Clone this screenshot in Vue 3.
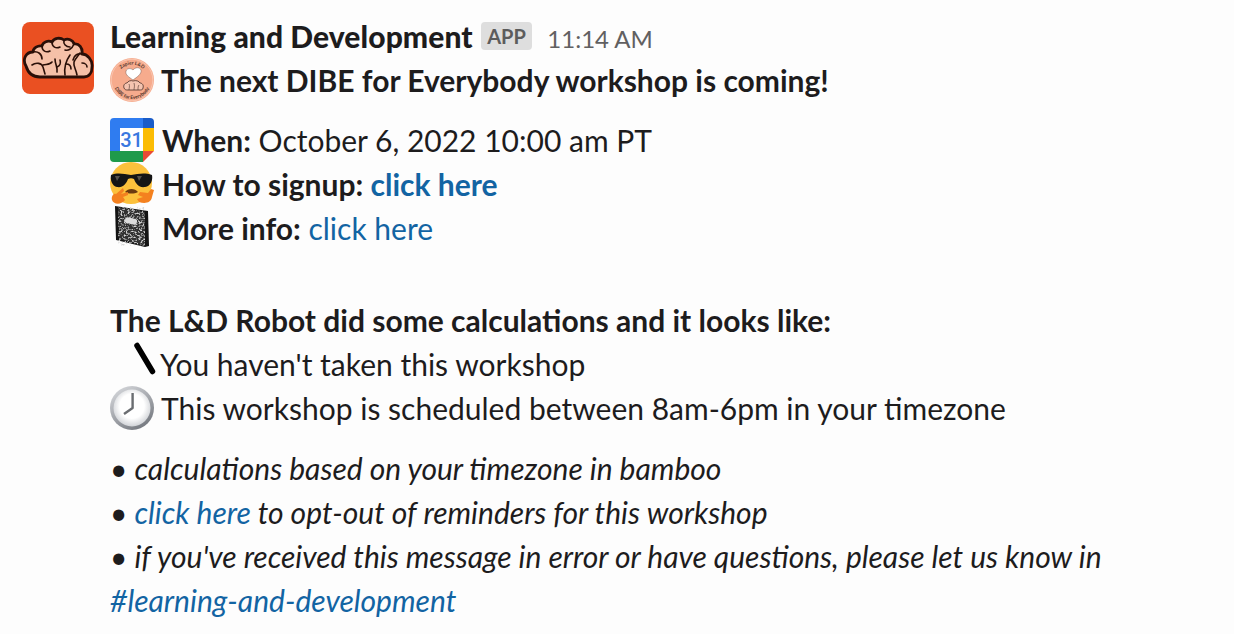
<script setup>
const brainOutline = "M4 44 C0 37 4 30 11 30 C11 26 16 23 20 24 C21 20 26 18 30 20 C32 16 38 15 42 18 C46 16 51 18 52 22 C57 21 61 26 60 32 C65 32 71 38 70 45 C70 51 67 55 62 55 L18 55 C11 55 6 51 4 44 Z"
const brainLines = [
  "M11 30 C16 29 20 32 20 37",
  "M20 24 C20 29 24 31 28 29",
  "M30 20 C30 25 34 27 38 25",
  "M42 18 C41 22 44 25 48 25",
  "M52 22 C50 27 46 29 43 28",
  "M60 32 C56 31 52 33 51 38",
  "M10 43 C14 40 20 41 21 45 L23 52",
  "M21 43 C24 42 28 43 30 40",
  "M35 50 C36 46 33 42 33 37",
  "M35 45 C38 44 39 41 38 38",
  "M43 53 C42 46 43 40 48 33",
  "M44 42 C47 42 49 44 49 47",
  "M55 53 C54 47 51 44 52 40 C53 37 56 34 58 31",
  "M60 41 C63 41 65 43 65 45"
]
</script>

<template>
  <div class="message">
    <div class="avatar">
      <svg viewBox="0 0 72 72" class="brain">
        <path :d="brainOutline" fill="#f5c0a8" stroke="#2a0f08" stroke-width="2.8" stroke-linejoin="round" />
        <path v-for="(l, i) in brainLines" :key="i" :d="l" fill="none" stroke="#2a0f08" stroke-width="1.6" stroke-linecap="round" />
      </svg>
    </div>
    <div class="body">
      <div class="header">
        <span class="name">Learning and Development</span>
        <span class="badge">APP</span>
        <span class="time">11:14 AM</span>
      </div>
      <div class="line strong">
        <span class="emoji">
          <svg viewBox="0 0 44 44">
            <defs>
              <path id="arcTop" d="M6.5 22 A15.5 15.5 0 0 1 37.5 22" />
              <path id="arcBottom" d="M3 22 A19 19 0 0 0 41 22" />
            </defs>
            <circle cx="22" cy="22" r="22" fill="#f6ab8d" />
            <circle cx="22" cy="22" r="20.8" fill="none" stroke="#fbd0bd" stroke-width="0.7" />
            <text font-family="Lato" font-size="4.8" font-weight="700" fill="#4a3028" text-anchor="middle"><textPath href="#arcTop" startOffset="50%">Zapier L&amp;D</textPath></text>
            <text font-family="Lato" font-size="4.8" font-weight="700" fill="#4a3028" text-anchor="middle"><textPath href="#arcBottom" startOffset="50%">DIBE for Everybody</textPath></text>
            <path d="M23 22 C19 19 15 17 16 13 C17 10 21 10 23 12 C25 9 30 9 31 12 C32 16 27 19 23 22 Z" fill="#fff" stroke="#7a5a50" stroke-width="0.5" />
            <path d="M14 30 C13 27 15 25 17 25 C18 23 21 22 23 23 C26 22 29 23 30 25 C32 25 34 27 33 30 C33 32 31 32 29 32 L18 32 C16 32 15 32 14 30 Z" fill="#f4c4b0" stroke="#4a3028" stroke-width="0.8" />
            <path d="M19 32 C19 30 20 28 19 26 M24 32 C24 30 25 28 24 25 M28 32 C28 30 28 28 29 27" fill="none" stroke="#4a3028" stroke-width="0.6" />
          </svg>
        </span>
        <span class="text nudge">The next DIBE for Everybody workshop is coming!</span>
      </div>

      <div class="line para">
        <span class="emoji">
          <svg viewBox="0 0 44 44">
            <path d="M4 0 H33 V10 H10 V33 H0 V4 A4 4 0 0 1 4 0 Z" fill="#2f7cf0" />
            <path d="M33 0 H40 A4 4 0 0 1 44 4 V10 H33 Z" fill="#1a5cc8" />
            <rect x="33" y="10" width="11" height="23" fill="#fbbc04" />
            <path d="M0 33 H33 V44 H4 A4 4 0 0 1 0 40 Z" fill="#1f9a4b" />
            <path d="M33 33 H44 L33 44 Z" fill="#e94a35" />
            <rect x="10" y="10" width="23" height="23" fill="#fff" />
            <text x="21.5" y="29" font-family="Roboto" font-size="20" font-weight="500" fill="#3a78e0" text-anchor="middle">31</text>
          </svg>
        </span>
        <span class="text"><b>When:</b> October 6, 2022 10:00 am PT</span>
      </div>
      <div class="line">
        <span class="emoji">
          <svg viewBox="0 0 44 44">
            <circle cx="21" cy="21" r="21" fill="#fcc13c" />
            <path d="M1 13 C8 10 14 12 21 13 C28 12 34 10 42 13 C43 18 41 24 35 25 C29 26 26 22 24 17 C22 16 20 16 18 17 C16 22 13 26 7 25 C2 24 0 18 1 13 Z" fill="#151515" />
            <path d="M5 14 L10 14 L7 19 Z M27 14 L32 14 L29 19 Z" fill="#55514a" />
            <path d="M15 30 C18 26 25 26 28 30 C24 32 19 32 15 30 Z" fill="#6b3a10" />
            <path d="M2 38 C1 34 4 31 6 32 L13 26 L14 29 L11 32 L18 30 L18 33 L13 35 L15 38 C11 43 4 43 2 38 Z" fill="#f4811f" />
            <path d="M42 35 L44 28 L41 27 L38 31 L30 30 L28 33 L33 35 L27 37 L29 40 C35 42 41 41 42 35 Z" fill="#f4811f" />
          </svg>
        </span>
        <span class="text"><b>How to signup: <a>click here</a></b></span>
      </div>
      <div class="line">
        <span class="emoji">
          <svg viewBox="0 0 44 44">
            <defs>
              <filter id="marble" x="0" y="0" width="100%" height="100%">
                <feTurbulence type="fractalNoise" baseFrequency="0.55" numOctaves="2" seed="4" />
                <feColorMatrix type="matrix" values="0 0 0 0 0.68  0 0 0 0 0.68  0 0 0 0 0.68  3 3 0 0 -3" />
                <feComposite in2="SourceGraphic" operator="over" />
              </filter>
            </defs>
            <path d="M5 0 L38 5 L39 40 L35 41 L6 34 Z" fill="#141414" />
            <path d="M8 1 L35 6 L35 40 L9 33 Z" fill="#333333" filter="url(#marble)" />
            <rect x="15" y="12" width="12" height="6" rx="2" transform="rotate(12 21 15)" fill="#dcdcdc" />
          </svg>
        </span>
        <span class="text"><b>More info:</b> <a>click here</a></span>
      </div>

      <div class="line blank"></div>

      <div class="line robot-head"><b>The L&amp;D Robot did some calculations and it looks like:</b></div>
      <div class="line">
        <span class="emoji">
          <svg viewBox="0 0 44 44">
            <path d="M27 3.5 L42.5 29.5" stroke="#000" stroke-width="5.5" stroke-linecap="round" fill="none" />
          </svg>
        </span>
        <span class="text tight">You haven't taken this workshop</span>
      </div>
      <div class="line">
        <span class="emoji">
          <svg viewBox="0 0 44 44">
            <defs>
              <linearGradient id="rim" x1="0.2" y1="0" x2="0.8" y2="1">
                <stop offset="0" stop-color="#d4d6da" />
                <stop offset="1" stop-color="#70747b" />
              </linearGradient>
              <radialGradient id="clockFace" cx="0.5" cy="0.45" r="0.6">
                <stop offset="0.55" stop-color="#ffffff" />
                <stop offset="1" stop-color="#c6c9ce" />
              </radialGradient>
            </defs>
            <circle cx="22" cy="22" r="22" fill="url(#rim)" />
            <circle cx="22" cy="22" r="18.5" fill="url(#clockFace)" />
            <path d="M22.6 7 V22 L14 28" fill="none" stroke="#6a6d71" stroke-width="2.4" stroke-linejoin="round" />
          </svg>
        </span>
        <span class="text nudge">This workshop is scheduled between 8am-6pm in your timezone</span>
      </div>

      <div class="line para"><i>• calculations based on your timezone in bamboo</i></div>
      <div class="line"><i>• <a>click here</a> to opt-out of reminders for this workshop</i></div>
      <div class="line"><i>• if you've received this message in error or have questions, please let us know in</i></div>
      <div class="line"><i><a>#learning-and-development</a></i></div>
    </div>
  </div>
</template>

<style scoped>
.message {
  display: flex;
  gap: 16px;
  padding: 14px 22px 0;
  background: #fdfdfd;
  height: 620px;
  font-family: Lato, sans-serif;
  font-size: 30px;
  line-height: 44px;
  color: #1d1c1d;
}
.avatar {
  flex: none;
  width: 72px;
  height: 72px;
  margin-top: 8px;
  background: #ea5022;
  border-radius: 8px;
}
.brain {
  display: block;
  width: 72px;
  height: 72px;
}
.body {
  flex: 1;
  min-width: 0;
}
.header {
  display: flex;
  align-items: center;
  height: 44px;
}
.name {
  font-weight: 900;
  letter-spacing: 0.08px;
}
.badge {
  margin-left: 8px;
  height: 28px;
  line-height: 28px;
  padding: 0 6.5px;
  border-radius: 4px;
  background: #dedede;
  color: #5c5c5c;
  font-size: 20px;
  font-weight: 700;
}
.time {
  margin-left: 15px;
  margin-top: 6px;
  font-size: 24px;
  color: #616061;
}
.line {
  display: flex;
  align-items: center;
  height: 44px;
  white-space: pre;
}
.strong {
  font-weight: 700;
}
.emoji {
  flex: none;
  width: 44px;
  height: 44px;
  margin-right: 8px;
}
.emoji svg {
  display: block;
  width: 44px;
  height: 44px;
  overflow: visible;
}
.nudge {
  margin-left: -1px;
}
.tight {
  margin-left: -2px;
}
.para {
  margin-top: 16px;
}
.robot-head {
  margin-top: 4px;
}
.blank {
  height: 44px;
}
a {
  color: #1264a3;
}
b {
  font-weight: 700;
}
</style>

<style>
html, body {
  background: #fdfdfd;
}
</style>
